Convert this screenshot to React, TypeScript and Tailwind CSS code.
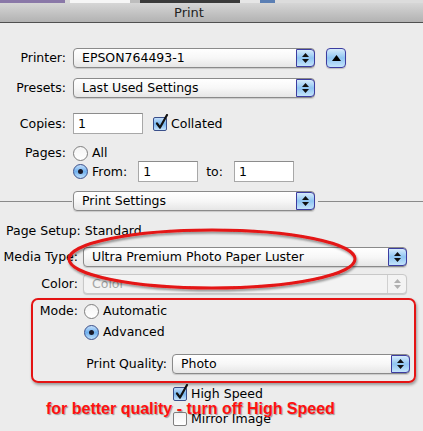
import React from 'react';

const font = { fontFamily: '"DejaVu Sans", "Lucida Grande", sans-serif' };

const Stepper = ({ disabled = false }: { disabled?: boolean }) => (
  <div
    className={`flex h-full w-[19px] flex-col items-center justify-center gap-[2px] rounded-r-[4px] border-l ${
      disabled
        ? 'border-[#d0d0d0] bg-transparent'
        : '-my-px -mr-px h-[calc(100%+2px)] border border-[#3c3ca0] bg-gradient-to-b from-[#d6ebfb] via-[#8fc5f2] to-[#c4e4fb]'
    }`}
  >
    <svg width="7" height="4" viewBox="0 0 7 4">
      <path d="M3.5 0L7 4H0z" fill={disabled ? '#b0b0b0' : '#111'} />
    </svg>
    <svg width="7" height="4" viewBox="0 0 7 4">
      <path d="M0 0h7L3.5 4z" fill={disabled ? '#b0b0b0' : '#111'} />
    </svg>
  </div>
);

const Popup = ({ label, width, disabled = false }: { label: string; width: string; disabled?: boolean }) => (
  <div
    className={`flex h-[20px] items-center rounded-[4px] border shadow-[0_1px_1px_rgba(0,0,0,0.15)] ${width} ${
      disabled
        ? 'border-[#c8c8c8] bg-[#f3f3f3] text-[#a5a5a5]'
        : 'border-[#8a8a8a] bg-gradient-to-b from-white via-[#f7f7f7] to-[#e6e6e6] text-black'
    }`}
  >
    <span className="flex-1 pl-[8px] text-[12.5px] leading-none">{label}</span>
    <Stepper disabled={disabled} />
  </div>
);

const TextField = ({ value, width }: { value: string; width: string }) => (
  <div className={`flex h-[21px] items-center border border-[#a8a8a8] border-t-[#8c8c8c] bg-white pl-[4px] text-[12.5px] ${width}`}>
    {value}
  </div>
);

const Radio = ({ checked = false }: { checked?: boolean }) => (
  <div
    className={`flex h-[15px] w-[15px] items-center justify-center rounded-full border ${
      checked
        ? 'border-[#3a4f8a] bg-gradient-to-b from-[#c2defa] via-[#6fb0ee] to-[#bfe0fb]'
        : 'border-[#7f7f7f] bg-gradient-to-b from-[#f4f4f4] to-white'
    }`}
  >
    {checked && <div className="h-[5px] w-[5px] rounded-full bg-[#1a1a2a]" />}
  </div>
);

const Checkbox = ({ checked = false }: { checked?: boolean }) => (
  <div
    className={`relative h-[14px] w-[14px] rounded-[2px] border ${
      checked
        ? 'border-[#3a4f8a] bg-gradient-to-b from-[#c2defa] via-[#78b6ef] to-[#c6e3fb]'
        : 'border-[#7f7f7f] bg-gradient-to-b from-[#f2f2f2] to-white'
    }`}
  >
    {checked && (
      <svg className="absolute -top-[4px] left-[1px]" width="14" height="16" viewBox="0 0 14 16">
        <path d="M2 9.5L5 13.5L12 1" stroke="#111" strokeWidth="2.2" fill="none" strokeLinecap="round" strokeLinejoin="round" />
      </svg>
    )}
  </div>
);

export default function App() {
  return (
    <div className="relative h-[431px] w-[423px] overflow-hidden bg-[#ececec] text-[12.5px] leading-[16px] text-black" style={font}>
      {/* strip of the window behind */}
      <div className="flex h-[3px]">
        <div className="w-[65px] bg-[#8a78a8]" />
        <div className="w-[5px] bg-[#d8d8d8]" />
        <div className="w-[60px] bg-[#f6f6f6]" />
        <div className="w-[10px] bg-[#bdbdbd]" />
        <div className="w-[100px] bg-[#3a3a3a]" />
        <div className="w-[20px] bg-[#e6e6e6]" />
        <div className="w-[15px] bg-[#5b7fb4]" />
        <div className="flex-1 bg-[#dcdcdc]" />
      </div>

      {/* title bar */}
      <div className="flex h-[20px] items-center border-b border-[#505050] bg-gradient-to-b from-[#d6d6d6] to-[#b2b2b2]">
        <div className="w-[378px] text-center text-[13px] text-[#222]">Print</div>
      </div>

      {/* printer + presets */}
      <div className="mt-[25px] flex h-[20px] items-center">
        <div className="w-[66px] text-right">Printer:</div>
        <div className="ml-[7px]">
          <Popup label="EPSON764493-1" width="w-[242px]" />
        </div>
        <div className="ml-[11px] flex h-[20px] w-[20px] items-center justify-center rounded-[4px] border border-[#3c3ca0] bg-gradient-to-b from-[#d6ebfb] via-[#8fc5f2] to-[#c4e4fb] shadow-[0_1px_1px_rgba(0,0,0,0.2)]">
          <svg width="9" height="6" viewBox="0 0 9 6">
            <path d="M4.5 0L9 6H0z" fill="#000" />
          </svg>
        </div>
      </div>
      <div className="mt-[10px] flex h-[20px] items-center">
        <div className="w-[66px] text-right">Presets:</div>
        <div className="ml-[7px]">
          <Popup label="Last Used Settings" width="w-[242px]" />
        </div>
      </div>

      {/* copies */}
      <div className="mt-[15px] flex h-[21px] items-center">
        <div className="w-[66px] text-right">Copies:</div>
        <div className="ml-[7px]">
          <TextField value="1" width="w-[70px]" />
        </div>
        <div className="ml-[10px]">
          <Checkbox checked />
        </div>
        <span className="ml-[4px]">Collated</span>
      </div>

      {/* pages */}
      <div className="mt-[11px] flex h-[16px] items-center">
        <div className="w-[66px] text-right">Pages:</div>
        <div className="ml-[7px]">
          <Radio />
        </div>
        <span className="ml-[4px]">All</span>
      </div>
      <div className="flex h-[21px] items-center">
        <div className="ml-[73px]">
          <Radio checked />
        </div>
        <span className="ml-[4px]">From:</span>
        <div className="ml-[11px]">
          <TextField value="1" width="w-[60px]" />
        </div>
        <span className="ml-[8px]">to:</span>
        <div className="ml-[11px]">
          <TextField value="1" width="w-[60px]" />
        </div>
      </div>

      {/* section popup */}
      <div className="mt-[9px] flex h-[20px] items-center">
        <div className="h-px w-[72px] bg-[#8a8a8a]" />
        <div className="ml-px">
          <Popup label="Print Settings" width="w-[242px]" />
        </div>
        <div className="ml-[3px] h-px flex-1 bg-[#8a8a8a]" />
      </div>

      <div className="mt-[12px] h-[16px] pl-[6px]">Page Setup: Standard</div>

      <div className="mt-[8px] flex h-[20px] items-center">
        <div className="w-[78px] text-right">Media Type:</div>
        <div className="ml-[5px]">
          <Popup label="Ultra Premium Photo Paper Luster" width="w-[324px]" />
        </div>
      </div>
      <div className="mt-[7px] flex h-[20px] items-center">
        <div className="w-[78px] text-right">Color:</div>
        <div className="ml-[5px]">
          <Popup label="Color" width="w-[324px]" disabled />
        </div>
      </div>

      {/* highlighted mode box */}
      <div className="ml-[31px] mt-[4px] h-[85px] w-[385px] rounded-[7px] border-[2.5px] border-[#e41414] pt-[3px] shadow-[1px_2px_3px_rgba(0,0,0,0.35)]">
        <div className="flex h-[16px] items-center">
          <div className="w-[45px] text-right">Mode:</div>
          <div className="ml-[6px]">
            <Radio />
          </div>
          <span className="ml-[4px]">Automatic</span>
        </div>
        <div className="mt-[5px] flex h-[16px] items-center">
          <div className="ml-[51px]">
            <Radio checked />
          </div>
          <span className="ml-[4px]">Advanced</span>
        </div>
        <div className="mt-[14px] flex h-[20px] items-center">
          <div className="w-[134px] text-right">Print Quality:</div>
          <div className="ml-[5px]">
            <Popup label="Photo" width="w-[238px]" />
          </div>
        </div>
      </div>

      <div className="mt-[3px] flex h-[16px] items-center">
        <div className="ml-[173px]">
          <Checkbox checked />
        </div>
        <span className="ml-[4px]">High Speed</span>
      </div>
      <div className="mt-[9px] flex h-[16px] items-center">
        <div className="ml-[173px]">
          <Checkbox />
        </div>
        <span className="ml-[4px]">Mirror Image</span>
      </div>

      {/* annotation overlays */}
      <svg className="pointer-events-none absolute left-0 top-0" width="423" height="431">
        <defs>
          <filter id="sh" x="-10%" y="-30%" width="120%" height="160%">
            <feDropShadow dx="1" dy="2" stdDeviation="1.2" floodColor="#000" floodOpacity="0.4" />
          </filter>
        </defs>
        <ellipse cx="212" cy="259" rx="143" ry="29" fill="none" stroke="#e41414" strokeWidth="3" filter="url(#sh)" />
      </svg>
      <div
        className="pointer-events-none absolute left-[46px] top-[401px] text-[16px] font-bold leading-none text-[#ff1010] [text-shadow:1px_1px_1px_rgba(0,0,0,0.35)]"
        style={{ fontFamily: '"Liberation Sans", Arial, sans-serif' }}
      >
        for better quality - turn off High Speed
      </div>
    </div>
  );
}
